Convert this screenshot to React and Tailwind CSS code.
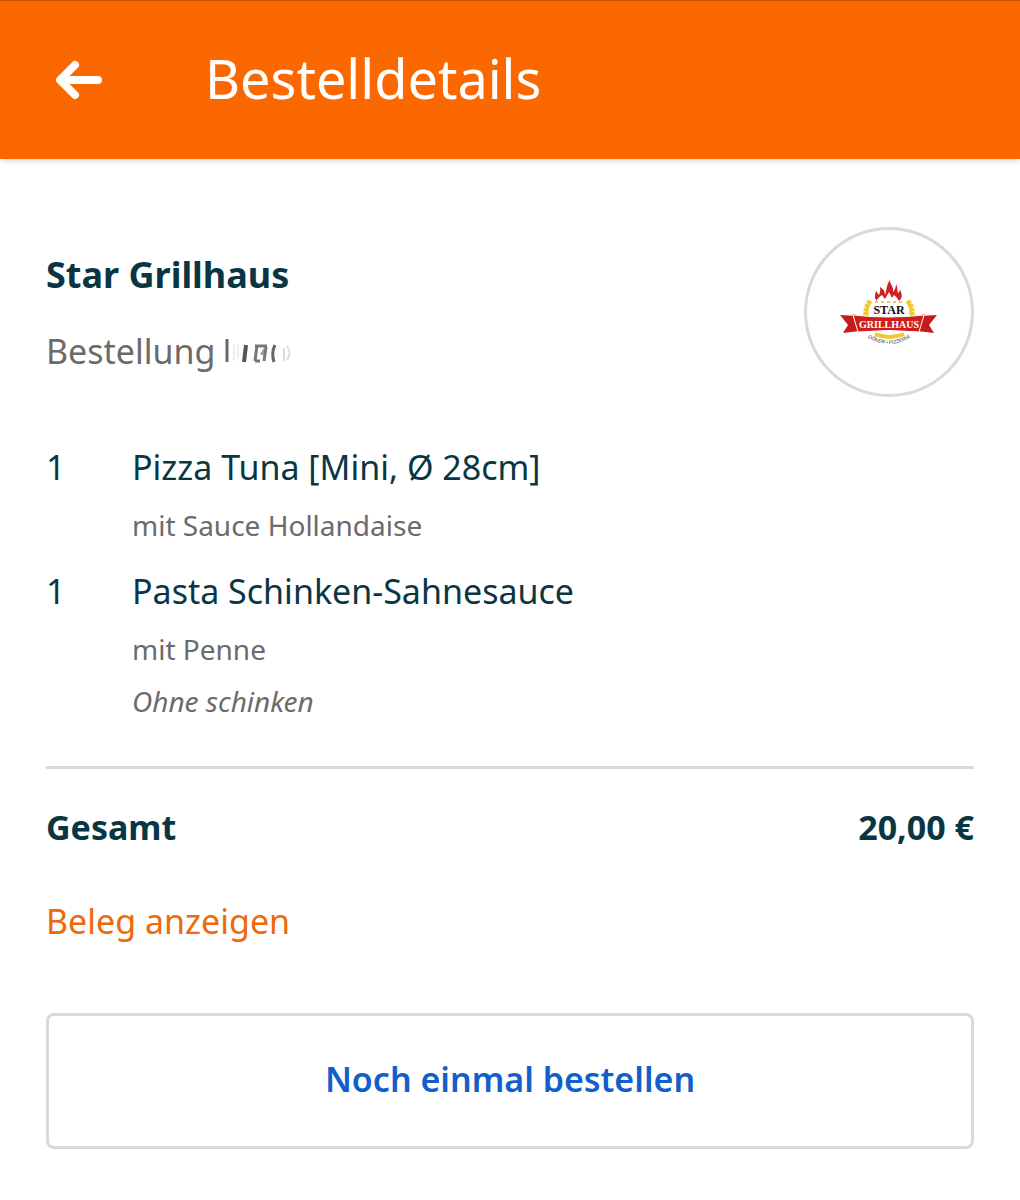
function Logo() {
  return (
    <svg viewBox="0 0 120 85" className="w-[120px]" role="img" aria-label="Star Grillhaus Logo">
      <g fill="none" stroke="#f0c832">
        <path d="M42 31q-5 6-4 15M78 31q5 6 4 15" strokeWidth="3" />
        <path d="M41 31q-5 6-4 15M79 31q5 6 4 15" strokeWidth="5" strokeDasharray="3 1" />
        <path d="M46 64q14 6 29 0" strokeWidth="4" />
      </g>
      <path d="M48 31c-3-3-2-6-1-10l3 4c2-4 1-7 1-8 3 2 5 4 5 8 2-5 1-10 5-15 0 5 4 6 3 12 2-2 3-5 3-8 2 4 1 6 2 9 2-1 2-3 2-4 2 5 3 9-1 12-2-4-4-5-5-6l-2 3-3-6-4 7-3-4c-2 1-4 3-5 5Z" fill="#cf2122" />
      <path d="M46 32h28" stroke="#edc65e" strokeWidth="2" strokeDasharray="3 3" />
      <text x="60" y="44" textAnchor="middle" className="font-['Liberation_Serif',serif] text-[12px] font-bold" fill="#111">STAR</text>
      <path d="M11 45l18 1 2 15-17 2 5-8ZM108 45l-18 1-2 15 17 2-5-8Z" fill="#c41c1b" />
      <path d="M23 44l8 2-5 1ZM96 44l-8 2 5 1Z" fill="#8b1112" />
      <path d="M24 45q36 4 71 0l-5 17q-30-3-61 0Z" fill="#cc1f1c" stroke="#fff" strokeWidth="1" />
      <text x="60" y="58" textAnchor="middle" className="font-['Liberation_Serif',serif] text-[10px] font-bold" fill="#fff">GRILLHAUS</text>
      <path id="motto" d="M38 67q22 14 44 0" fill="none" />
      <text className="font-['Liberation_Sans',sans-serif] text-[5px] italic" fill="#333" textAnchor="middle">
        <textPath href="#motto" startOffset="50%">DÖNER • PIZZERIA</textPath>
      </text>
    </svg>
  );
}

function HiddenNumber() {
  return (
    <svg viewBox="0 0 80 30" className="w-20" role="img" aria-label="Bestellnummer verdeckt" fill="none">
      <path d="M3 3v23" stroke="#686868" strokeWidth="3" />
      <path d="M10 9v16M14 8v14" stroke="#eee" strokeWidth="2" />
      <path d="M22 9l-2 17" stroke="#555" strokeWidth="4" />
      <path d="M33 9l-2 16M31 10h12M31 25h5M42 11l-2 14" stroke="#777" strokeWidth="3" />
      <path d="M36 18l4-6v8Z" fill="#999" />
      <path d="M51 9q-4 8-1 17" stroke="#666" strokeWidth="3" />
      <path d="M60 12v13M63 10q5 7 0 14" stroke="#ddd" strokeWidth="2" />
    </svg>
  );
}

function Item({ name, children }) {
  return (
    <li className="flex">
      <span className="w-[86px] shrink-0 text-[34px] leading-[64px] text-[#0a3644]">1</span>
      <div className="min-w-0">
        <p className="text-[34px] leading-[64px] text-[#0a3644]">{name}</p>
        {children}
      </div>
    </li>
  );
}

function Note({ children }) {
  return <p className="text-[28px] leading-[52px]">{children}</p>;
}

export default function App() {
  return (
    <div className="min-h-screen bg-white font-['Noto_Sans',sans-serif] text-[#6b6b6b]">
      <header className="flex items-center border-t border-[#c85407] bg-[#fb6800] px-[54px] pt-[38px] pb-[42px] text-white shadow-md">
        <button aria-label="Zurück" className="w-[151px] pt-1">
          <svg viewBox="0 0 50 40" className="w-[50px]" fill="none" stroke="currentColor" strokeWidth="8" strokeLinecap="round" strokeLinejoin="round"><path d="M44 20H7M21 5 6 20l15 15" /></svg>
        </button>
        <h1 className="text-[54px] leading-[78px]">Bestelldetails</h1>
      </header>
      <main className="px-[46px] pt-[68px]">
        <section className="flex items-start justify-between">
          <div className="pt-4">
            <h2 className="text-[36px] font-bold leading-[64px] text-[#0a3644]">Star Grillhaus</h2>
            <p className="mt-3 flex items-center gap-2 text-[34px] leading-[64px]">Bestellung <HiddenNumber /></p>
          </div>
          <div className="flex size-[170px] shrink-0 items-center justify-center rounded-full border-3 border-[#d9d9d9]"><Logo /></div>
        </section>
        <ul className="mt-[38px] flex flex-col gap-2">
          <Item name="Pizza Tuna [Mini, Ø 28cm]"><Note>mit Sauce Hollandaise</Note></Item>
          <Item name="Pasta Schinken-Sahnesauce"><Note>mit Penne</Note><Note><em>Ohne schinken</em></Note></Item>
        </ul>
        <div className="mt-[39px] flex justify-between border-t-3 border-[#d9d9d9] pt-[26px] text-[34px] font-bold leading-[64px] text-[#0a3644]"><span>Gesamt</span><span>20,00 €</span></div>
        <a href="#beleg" className="mt-[30px] block text-[34px] leading-[64px] text-[#ec6a0c]">Beleg anzeigen</a>
        <button className="mt-[60px] w-full rounded-lg border-3 border-[#d9d9d9] pt-[30px] pb-[34px] text-[34px] font-semibold leading-[66px] text-[#125fca]">Noch einmal bestellen</button>
      </main>
    </div>
  );
}
